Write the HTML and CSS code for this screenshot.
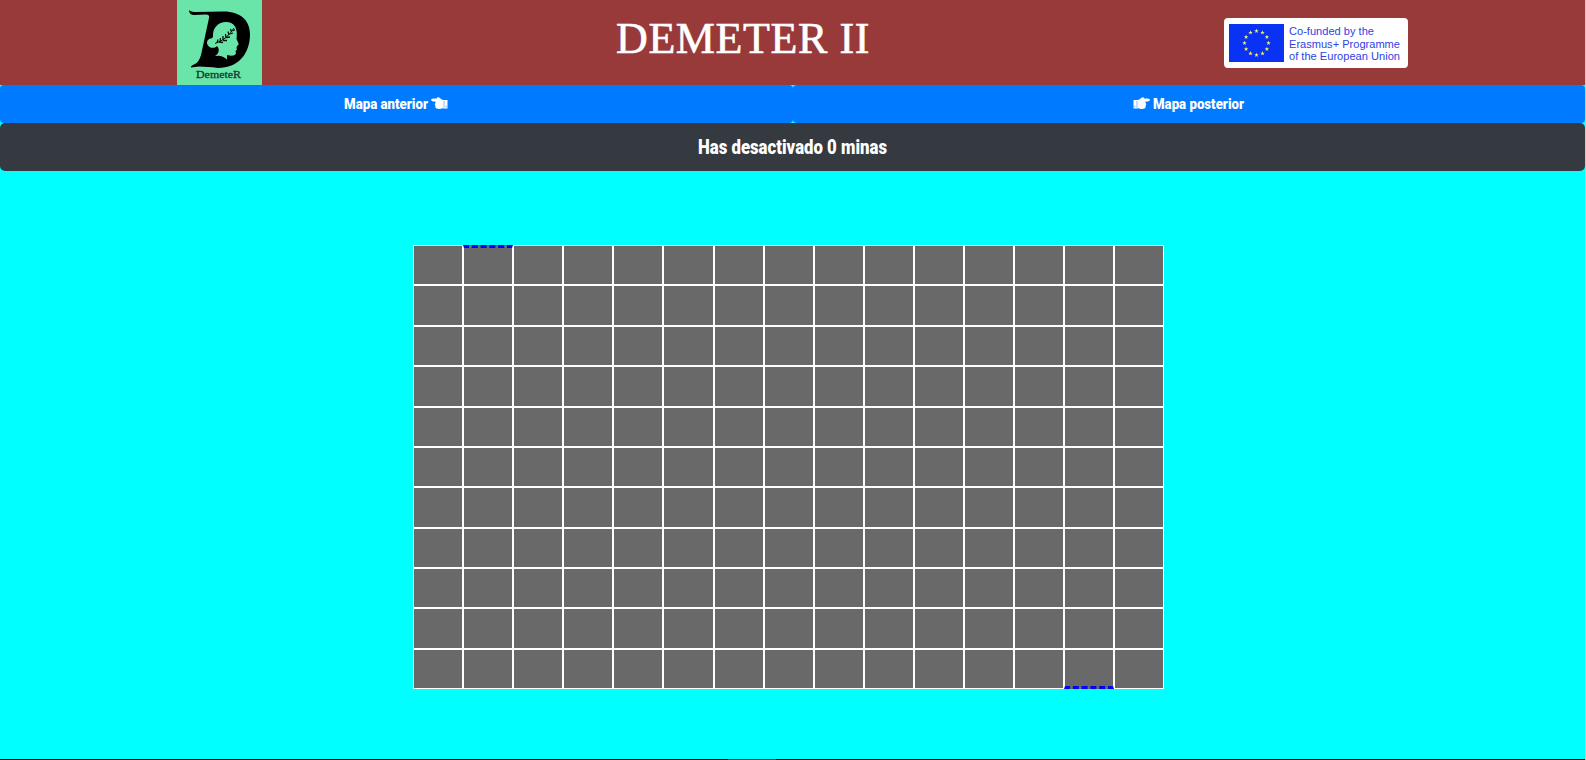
FILE: index.html
```html
<!DOCTYPE html>
<html lang="es">
<head>
<meta charset="utf-8">
<title>DEMETER II</title>
<link rel="stylesheet" href="styles.css">
</head>
<body>
<div class="page">
  <header class="header">
    <svg class="logo" viewBox="0 0 85 85" role="img" aria-label="DemeteR">
      <path d="M12 10Q14 12 19 12L45 11.500C64 11 73 21 73 34C73 54 61 68 41 68Q30 66.500 22 66.500L14 67.500Q13 66 18 64Q22 62 24 55L32 18Q33 14.500 29 14.500L17 15Q12 15 12 10Z"/>
      <path class="logo-cut" d="M49 22C41 22 36 28 36 35C36 37 36 38 34 38.500C30 39 29 43 31 45.500C33 49 39 48 40 46C43 49 42 54 38 56Q45 54.500 50 59.500L50 55Q58 57 59 53L58.500 51L60 49.500L59.500 48L60 46Q62 45 61.500 43.500L59.500 39C61 29 58 22 49 22Z"/>
      <path class="laurel" d="M38 43.500Q50 39.500 57 28"/>
      <path class="leaves" d="M40 43l1-3.500M43 42l.5-4M46 40l0-4M49 38l-.5-4M52 35l-1-3.500M54.500 32l-1-3M42 42l4 .5M46 40.500l4 0M49.500 37.500l3.500-.5M53 34l3-1M55.500 31l2.500-1.500"/>
      <text x="19" y="77.500" textLength="45" lengthAdjust="spacingAndGlyphs">DemeteR</text>
    </svg>
    <h1 class="title">DEMETER II</h1>
    <div class="funding">
      <svg class="flag" viewBox="-27.500 -19 55 38" aria-hidden="true">
        <defs><path id="star" d="M0-2.300L.6-.7L2.200-.7L.9.300L1.400 1.900L0 1L-1.400 1.900L-.9.300L-2.200-.7L-.6-.7Z"/></defs>
        <rect x="-27.500" y="-19" width="55" height="38"/>
        <g class="stars">
          <use href="#star" y="-12"/><use href="#star" x="6" y="-10.400"/><use href="#star" x="10.400" y="-6"/>
          <use href="#star" x="12"/><use href="#star" x="10.400" y="6"/><use href="#star" x="6" y="10.400"/>
          <use href="#star" y="12"/><use href="#star" x="-6" y="10.400"/><use href="#star" x="-10.400" y="6"/>
          <use href="#star" x="-12"/><use href="#star" x="-10.400" y="-6"/><use href="#star" x="-6" y="-10.400"/>
        </g>
      </svg>
      <svg class="funding-text" viewBox="0 0 112 50">
        <text x="0" y="16.500" textLength="85" lengthAdjust="spacingAndGlyphs">Co-funded by the</text>
        <text x="0" y="29.500" textLength="111" lengthAdjust="spacingAndGlyphs">Erasmus+ Programme</text>
        <text x="0" y="42" textLength="111" lengthAdjust="spacingAndGlyphs">of the European Union</text>
      </svg>
    </div>
  </header>
  <nav class="nav">
    <button class="btn">
      <svg width="120" height="38" viewBox="-8 0 120 38">
        <text x="0" y="24" textLength="84" lengthAdjust="spacingAndGlyphs">Mapa anterior</text>
        <path d="M87 14.500Q88 13.500 90 13.500H93L93 12.500Q95 11.500 97 14L99 15V23Q96 24.500 92.500 23.500Q90.500 22 91.500 21Q90 19.500 91.500 17.500V16.500H89Q87 16 87 14.500ZM99 15H103.500V23.500H99Z"/>
        <path class="cuff" d="M100 16V23M102.200 20.500v2"/>
      </svg>
    </button>
    <button class="btn">
      <svg width="128" height="38" viewBox="-8 0 128 38">
        <path d="M17 14.500Q16 13.500 14 13.500H11L11 12.500Q9 11.500 7 14L5 15V23Q8 24.500 11.500 23.500Q13.500 22 12.500 21Q14 19.500 12.500 17.500V16.500H15Q17 16 17 14.500ZM5 15H.5V23.500H5Z"/>
        <path class="cuff" d="M4 16V23M1.800 20.500v2"/>
        <text x="20" y="24" textLength="91" lengthAdjust="spacingAndGlyphs">Mapa posterior</text>
      </svg>
    </button>
  </nav>
  <div class="status">
    <svg width="210" height="48" viewBox="-10 0 210 48">
      <text x="0" y="30.500" textLength="189" lengthAdjust="spacingAndGlyphs">Has desactivado 0 minas</text>
    </svg>
  </div>
  <main class="board" id="board"></main>
  <footer class="edge"><span class="edge-mark"></span></footer>
</div>
<script src="board.js"></script>
</body>
</html>
```

FILE: styles.css
```css
* { box-sizing: border-box; }
body { margin: 0; background: #c8c8c8; overflow: hidden; }
.page { width: 1585px; height: 760px; display: flex; flex-direction: column; background: #00ffff; }
.header { height: 85px; flex: none; display: flex; background: #983a3a; padding-left: 177px; }
.logo { width: 85px; height: 85px; background: #69e5aa; }
.logo text { font: 400 11px "Liberation Serif", serif; fill: #143c2b; stroke: #143c2b; stroke-width: .3; }
.logo-cut { fill: #69e5aa; }
.laurel, .leaves { fill: none; stroke: #07130e; stroke-width: 1; }
.leaves { stroke-width: 1.3; }
.title { margin: 14px 0 0 354px; width: 258px; font: 400 44px/50px "Liberation Serif", serif; letter-spacing: .6px; color: #fff; -webkit-text-stroke: .6px #fff; white-space: nowrap; }
.funding { margin: 18px 0 0 350px; width: 184px; height: 50px; display: flex; align-items: center; gap: 5px; padding-left: 5px; background: #fff; border-radius: 4px; }
.flag { width: 55px; height: 38px; flex: none; fill: #0a32f5; }
.stars { fill: #f2f04a; }
.funding-text { width: 112px; height: 50px; flex: none; fill: #2f42e5; font: 11.5px "Liberation Sans", sans-serif; }
.nav { height: 38px; flex: none; display: grid; grid-template-columns: 1fr 1fr; }
.btn { border: 0; padding: 0; border-radius: 4px; background: #007bff; display: flex; justify-content: center; align-items: center; }
.btn svg { fill: #fff; font: 900 15.5px Roboto, sans-serif; }
.btn .cuff { fill: none; stroke: #007bff; stroke-width: .5; }
.status { height: 48px; flex: none; display: flex; justify-content: center; background: #343a40; border-radius: 5px; }
.status svg { fill: #fff; font: 900 19.5px Roboto, sans-serif; }
.board { width: 751px; height: 444px; flex: none; margin: 74.1px 0 0 413.13px; display: grid; grid-template-columns: repeat(15, 1fr); grid-template-rows: repeat(11, 1fr); }
.cell { background: #696969; border: 1px solid #fff; }
.cell-start { border-top: 3px dashed #00f; }
.cell-end { border-bottom: 3px dashed #00f; }
.edge { height: 1px; margin-top: auto; background: #000; padding-left: 728px; }
.edge-mark { display: block; width: 48px; height: 1px; background: #3a3a3a; }
```

FILE: board.js
```js
const board = document.getElementById("board");
const columns = 15;
const rows = 11;
for (let i = 0; i < columns * rows; i++) {
  const cell = document.createElement("div");
  cell.className = "cell";
  if (i === 1) cell.classList.add("cell-start");
  if (i === columns * rows - 2) cell.classList.add("cell-end");
  board.append(cell);
}
```
